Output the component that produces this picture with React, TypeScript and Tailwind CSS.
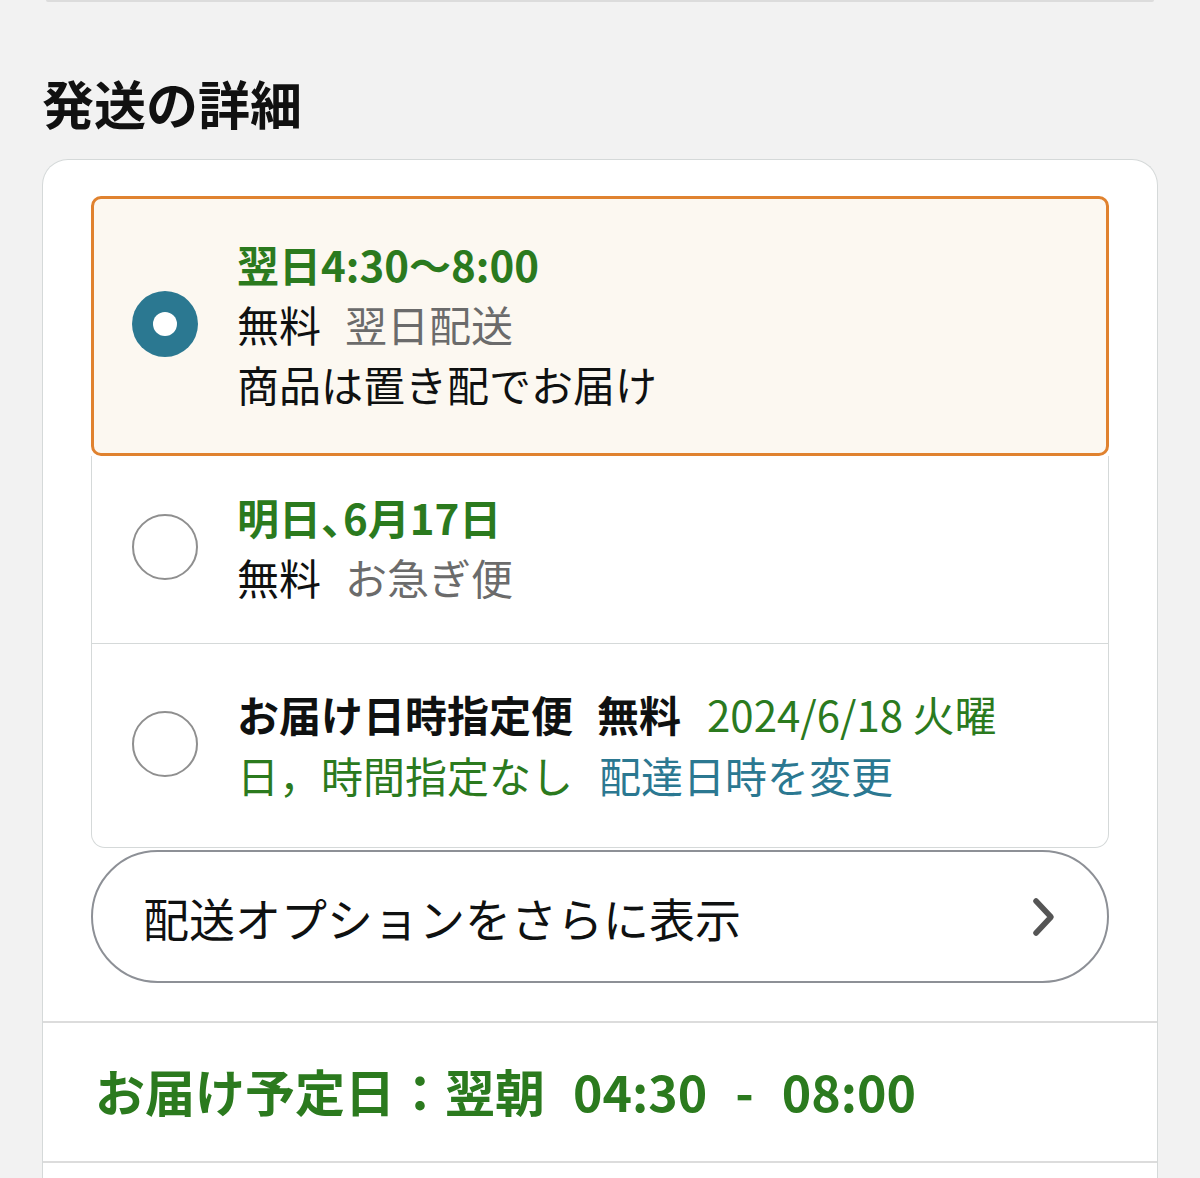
const font = { fontFamily: '"Noto Sans CJK JP", "Noto Sans", sans-serif' };

function Radio({ checked }: { checked?: boolean }) {
  if (checked) {
    return (
      <div className="flex h-[66px] w-[66px] shrink-0 items-center justify-center rounded-full bg-[#2b7891]">
        <div className="h-[24px] w-[24px] rounded-full bg-white" />
      </div>
    );
  }
  return <div className="h-[66px] w-[66px] shrink-0 rounded-full border-2 border-[#8f8f8f] bg-white" />;
}

export default function App() {
  return (
    <div className="min-h-[1178px] bg-[#f2f2f2] text-[#0f1111]" style={font}>
      {/* previous card edge */}
      <div className="mx-[46px] h-[2px] rounded-b-full bg-[#dcdcdc]" />

      <h2 className="mt-[70px] ml-[42px] text-[52px] font-bold leading-[62px] text-[#111]">発送の詳細</h2>

      <div className="mx-[42px] mt-[25px] rounded-t-[26px] border border-b-0 border-[#d5d9d9] bg-white">
        <div className="px-[48px] pt-[36px] pb-[38px]">
          {/* selected option */}
          <div className="flex items-center rounded-[10px] border-[3px] border-[#e0822f] bg-[#fcf8f1] pl-[38px] pr-[30px] pt-[35px] pb-[39px]">
            <Radio checked />
            <div className="ml-[39px] text-[42px] leading-[60px]">
              <div className="font-bold text-[#2b7a1e]">翌日4:30〜8:00</div>
              <div>
                <span>無料</span>
                <span className="ml-[24px] text-[#6b6b6b]">翌日配送</span>
              </div>
              <div>商品は置き配でお届け</div>
            </div>
          </div>

          {/* option 2 */}
          <div className="flex items-center border-x border-b border-[#d5d9d9] pl-[40px] pr-[30px] pt-[31px] pb-[36px]">
            <Radio />
            <div className="ml-[39px] text-[42px] leading-[60px]">
              <div className="font-bold text-[#2b7a1e]">
                明日<span className="tracking-[-20px]">、</span>6月17日
              </div>
              <div>
                <span>無料</span>
                <span className="ml-[24px] text-[#6b6b6b]">お急ぎ便</span>
              </div>
            </div>
          </div>

          {/* option 3 */}
          <div className="flex items-center rounded-b-[14px] border-x border-b border-[#d5d9d9] pl-[40px] pr-[90px] pt-[39px] pb-[42px]">
            <Radio />
            <div className="ml-[39px] text-[42px] leading-[61px]">
              <div>
                <span className="font-bold">お届け日時指定便</span>
                <span className="ml-[24px] font-bold">無料</span>
                <span className="ml-[26px] text-[#2b7a1e]">2024/6/18 火曜</span>
              </div>
              <div>
                <span className="text-[#2b7a1e]">日，時間指定なし</span>
                <span className="ml-[26px] text-[#2b7891]">配達日時を変更</span>
              </div>
            </div>
          </div>

          {/* more options */}
          <button className="mt-[2px] flex h-[133px] w-full items-center justify-between rounded-full border-2 border-[#8d9096] bg-white pl-[50px] pr-[50px] text-left">
            <span className="text-[46px] leading-none text-[#0f1111]">配送オプションをさらに表示</span>
            <svg width="26" height="42" viewBox="0 0 26 42" fill="none">
              <path d="M5 5 L20 21 L5 37" stroke="#555" strokeWidth="5.5" strokeLinecap="round" strokeLinejoin="round" />
            </svg>
          </button>
        </div>

        <div className="border-t-2 border-[#dcdcdc] px-[52px] pt-[37px] pb-[41px]">
          <div className="flex items-center text-[50px] font-bold leading-[60px] text-[#2b7a1e]">
            <span>お届け予定日：翌朝</span>
            <span className="ml-[28px]">04:30</span>
            <span className="ml-[28px]">-</span>
            <span className="ml-[28px]">08:00</span>
          </div>
        </div>
        <div className="h-[20px] border-t-2 border-[#dcdcdc]" />
      </div>
    </div>
  );
}
